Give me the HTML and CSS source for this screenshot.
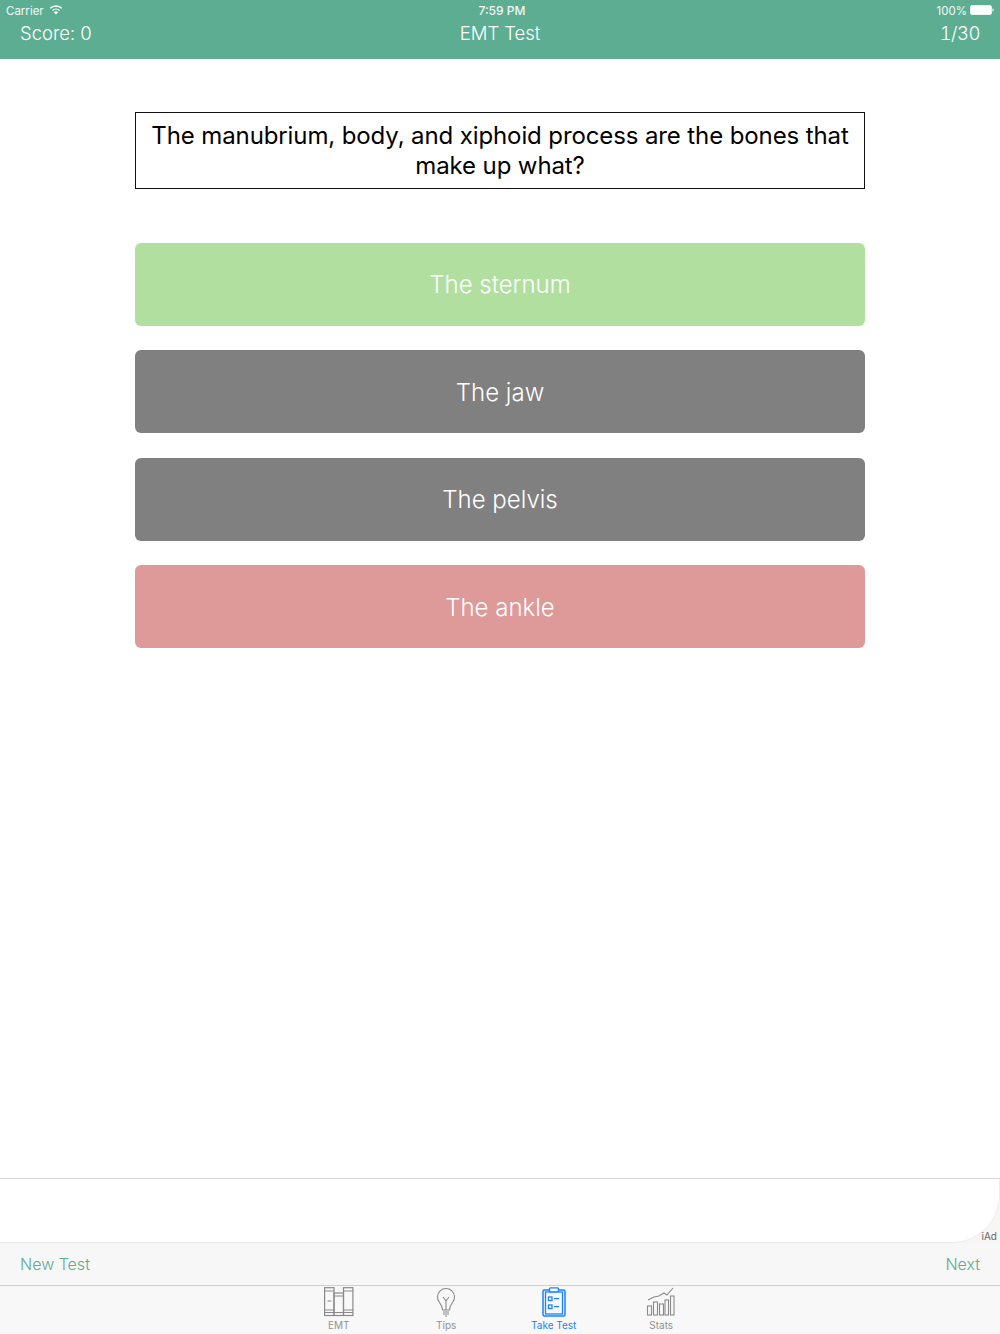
FILE: index.html
```html
<!DOCTYPE html>
<html lang="en">
<head>
<meta charset="utf-8">
<title>EMT Test</title>
<link rel="stylesheet" href="styles.css">
</head>
<body>
<div class="app">
  <header class="header">
    <div class="status">
      <div class="status-left">
        <span class="status-text">Carrier</span>
        <svg width="14" height="10" viewBox="0 0 14 10"><path d="M7 9.600 4.900 7.300a3 3 0 0 1 4.200 0Z" fill="#fff"/><path d="M3.400 5.600a5.200 5.200 0 0 1 7.200 0M1.200 3.300a8.300 8.300 0 0 1 11.600 0" fill="none" stroke="#fff" stroke-width="1.400"/></svg>
      </div>
      <div class="status-time">7:59 PM</div>
      <div class="status-right">
        <span class="status-text">100%</span>
        <svg width="24" height="10" viewBox="0 0 24 10"><rect x=".5" y=".5" width="21" height="9" rx="1.500" fill="#fff" stroke="#fff" stroke-opacity=".7"/><path d="M22.500 3.500c.8 0 1.200.6 1.200 1.500s-.4 1.500-1.200 1.500Z" fill="#fff"/></svg>
      </div>
    </div>
    <div class="nav">
      <span class="nav-side">Score: 0</span>
      <span class="nav-title">EMT Test</span>
      <span class="nav-side nav-right">1/30</span>
    </div>
  </header>

  <main class="main">
    <div class="question">The manubrium, body, and xiphoid process are the bones that make up what?</div>
    <div class="answers">
      <div class="answer correct">The sternum</div>
      <div class="answer neutral">The jaw</div>
      <div class="answer neutral">The pelvis</div>
      <div class="answer wrong">The ankle</div>
    </div>
  </main>

  <section class="ad">
    <span class="ad-label">iAd</span>
  </section>

  <div class="toolbar">
    <span>New Test</span>
    <span>Next</span>
  </div>

  <nav class="tabbar">
    <div class="tab">
      <svg width="30" height="30" viewBox="0 0 30 30" fill="none" stroke="#8a8a8a" stroke-width="1.200"><rect x=".6" y=".7" width="9.400" height="27.800"/><rect x="10" y="6" width="9.500" height="22.500"/><rect x="19.500" y=".7" width="9.400" height="27.800"/><path d="M.6 4H10M19.500 4h9.400M.6 23H10M.6 25.500H10M10 9h9.500M10 25.500h9.500M19.500 23h9.400M19.500 25.500h9.400M3.500 14h4"/></svg>
      <span class="tab-label">EMT</span>
    </div>
    <div class="tab">
      <svg width="30" height="30" viewBox="0 0 30 30" fill="none" stroke="#8a8a8a" stroke-width="1.100"><path d="M11.500 23c0-3-1-4.500-3-7.500a8.500 8.500 0 1 1 13 0c-2 3-3 4.500-3 7.500Z"/><path d="M15 23v-9l-3-4M15 14l3-4M12 25h6M12 27h6M14 29h2"/></svg>
      <span class="tab-label">Tips</span>
    </div>
    <div class="tab active">
      <svg width="30" height="30" viewBox="0 0 30 30" fill="none" stroke="#1a82fb" stroke-width="1.300"><rect x="4" y="3" width="22" height="26" rx="1.500" stroke-width="1.500"/><rect x="6.500" y="5" width="17" height="22"/><rect x="10.500" y=".8" width="9" height="4" rx="1" fill="#f8f8f8"/><rect x="9.500" y="10" width="3.500" height="3.500"/><rect x="9.500" y="18" width="3.500" height="3.500"/><path d="M15 11.700h5M15 19.700h5"/></svg>
      <span class="tab-label">Take Test</span>
    </div>
    <div class="tab">
      <svg width="30" height="30" viewBox="0 0 30 30" fill="none" stroke="#8a8a8a" stroke-width="1.100"><rect x="1.500" y="19" width="4" height="9"/><rect x="7.500" y="15" width="4" height="13"/><rect x="13.500" y="17" width="4" height="11"/><rect x="19" y="13" width="3.500" height="15"/><rect x="24.500" y="9" width="3.500" height="19"/><path d="M2 13l6-3 5-1 5-3 3 2 6-7"/></svg>
      <span class="tab-label">Stats</span>
    </div>
  </nav>
</div>
</body>
</html>
```
FILE: styles.css
```css
* { box-sizing: border-box; }
html, body { margin: 0; padding: 0; }
body { background: #fff; font-family: Inter, "Liberation Sans", sans-serif; }
.app { width: 1000px; height: 1334px; display: flex; flex-direction: column; overflow: hidden; }

.header { height: 59px; background: #5dad93; color: #fff; flex: none; }
.status { height: 20px; padding: 0 6px; display: grid; grid-template-columns: 1fr auto 1fr; align-items: center; font-size: 11.500px; color: #f2f8f6; }
.status-left { display: flex; align-items: center; gap: 5px; }
.status-text { padding-top: 1px; }
.status-time { font-weight: 500; font-size: 12px; padding-left: 4px; }
.status-right { display: flex; justify-content: flex-end; align-items: center; gap: 3px; }
.nav { height: 26px; padding: 0 20px; display: grid; grid-template-columns: 1fr auto 1fr; align-items: center; font-size: 18.500px; font-weight: 300; font-variant-numeric: tabular-nums; }
.nav-right { text-align: right; letter-spacing: -.5px; }

.main { flex: 1; padding: 53px 135px 0; }
.question { border: 1px solid #111; height: 77px; padding: 8px 12px 0; text-align: center; font-size: 24px; letter-spacing: -.11px; line-height: 30px; color: #000; }
.answers { margin-top: 53.700px; display: flex; flex-direction: column; gap: 24.500px; }
.answer { height: 83px; padding-top: 1px; border-radius: 6px; display: flex; align-items: center; justify-content: center; color: #fff; font-size: 24px; font-weight: 350; }
.correct { background: #b1df9f; }
.neutral { background: #808080; }
.wrong { background: #de9999; }

.ad { height: 65px; flex: none; border-top: 1px solid #d8d8d8; background: #f7f6f4; position: relative; overflow: hidden; }
.ad::before { content: ""; position: absolute; inset: 0; background: #fff; border-right: 1px solid #ececec; border-bottom: 1px solid #ececec; border-bottom-right-radius: 48px; }
.ad-label { position: absolute; right: 3px; bottom: 1px; font-size: 10px; color: #666; }

.toolbar { height: 43px; flex: none; padding: 0 20px; display: flex; justify-content: space-between; align-items: center; background: #f7f7f7; border-bottom: 1px solid #cfcfcf; color: #5dad93; font-size: 16px; font-weight: 350; }

.tabbar { height: 48px; flex: none; background: #f8f8f8; display: flex; justify-content: center; gap: 77.500px; padding-top: 1px; }
.tab { width: 30px; display: flex; flex-direction: column; align-items: center; color: #929292; }
.tab svg { flex: none; }
.tab-label { font-size: 10px; line-height: 12px; white-space: nowrap; margin-top: 2px; }
.active { color: #1a82fb; }
```
